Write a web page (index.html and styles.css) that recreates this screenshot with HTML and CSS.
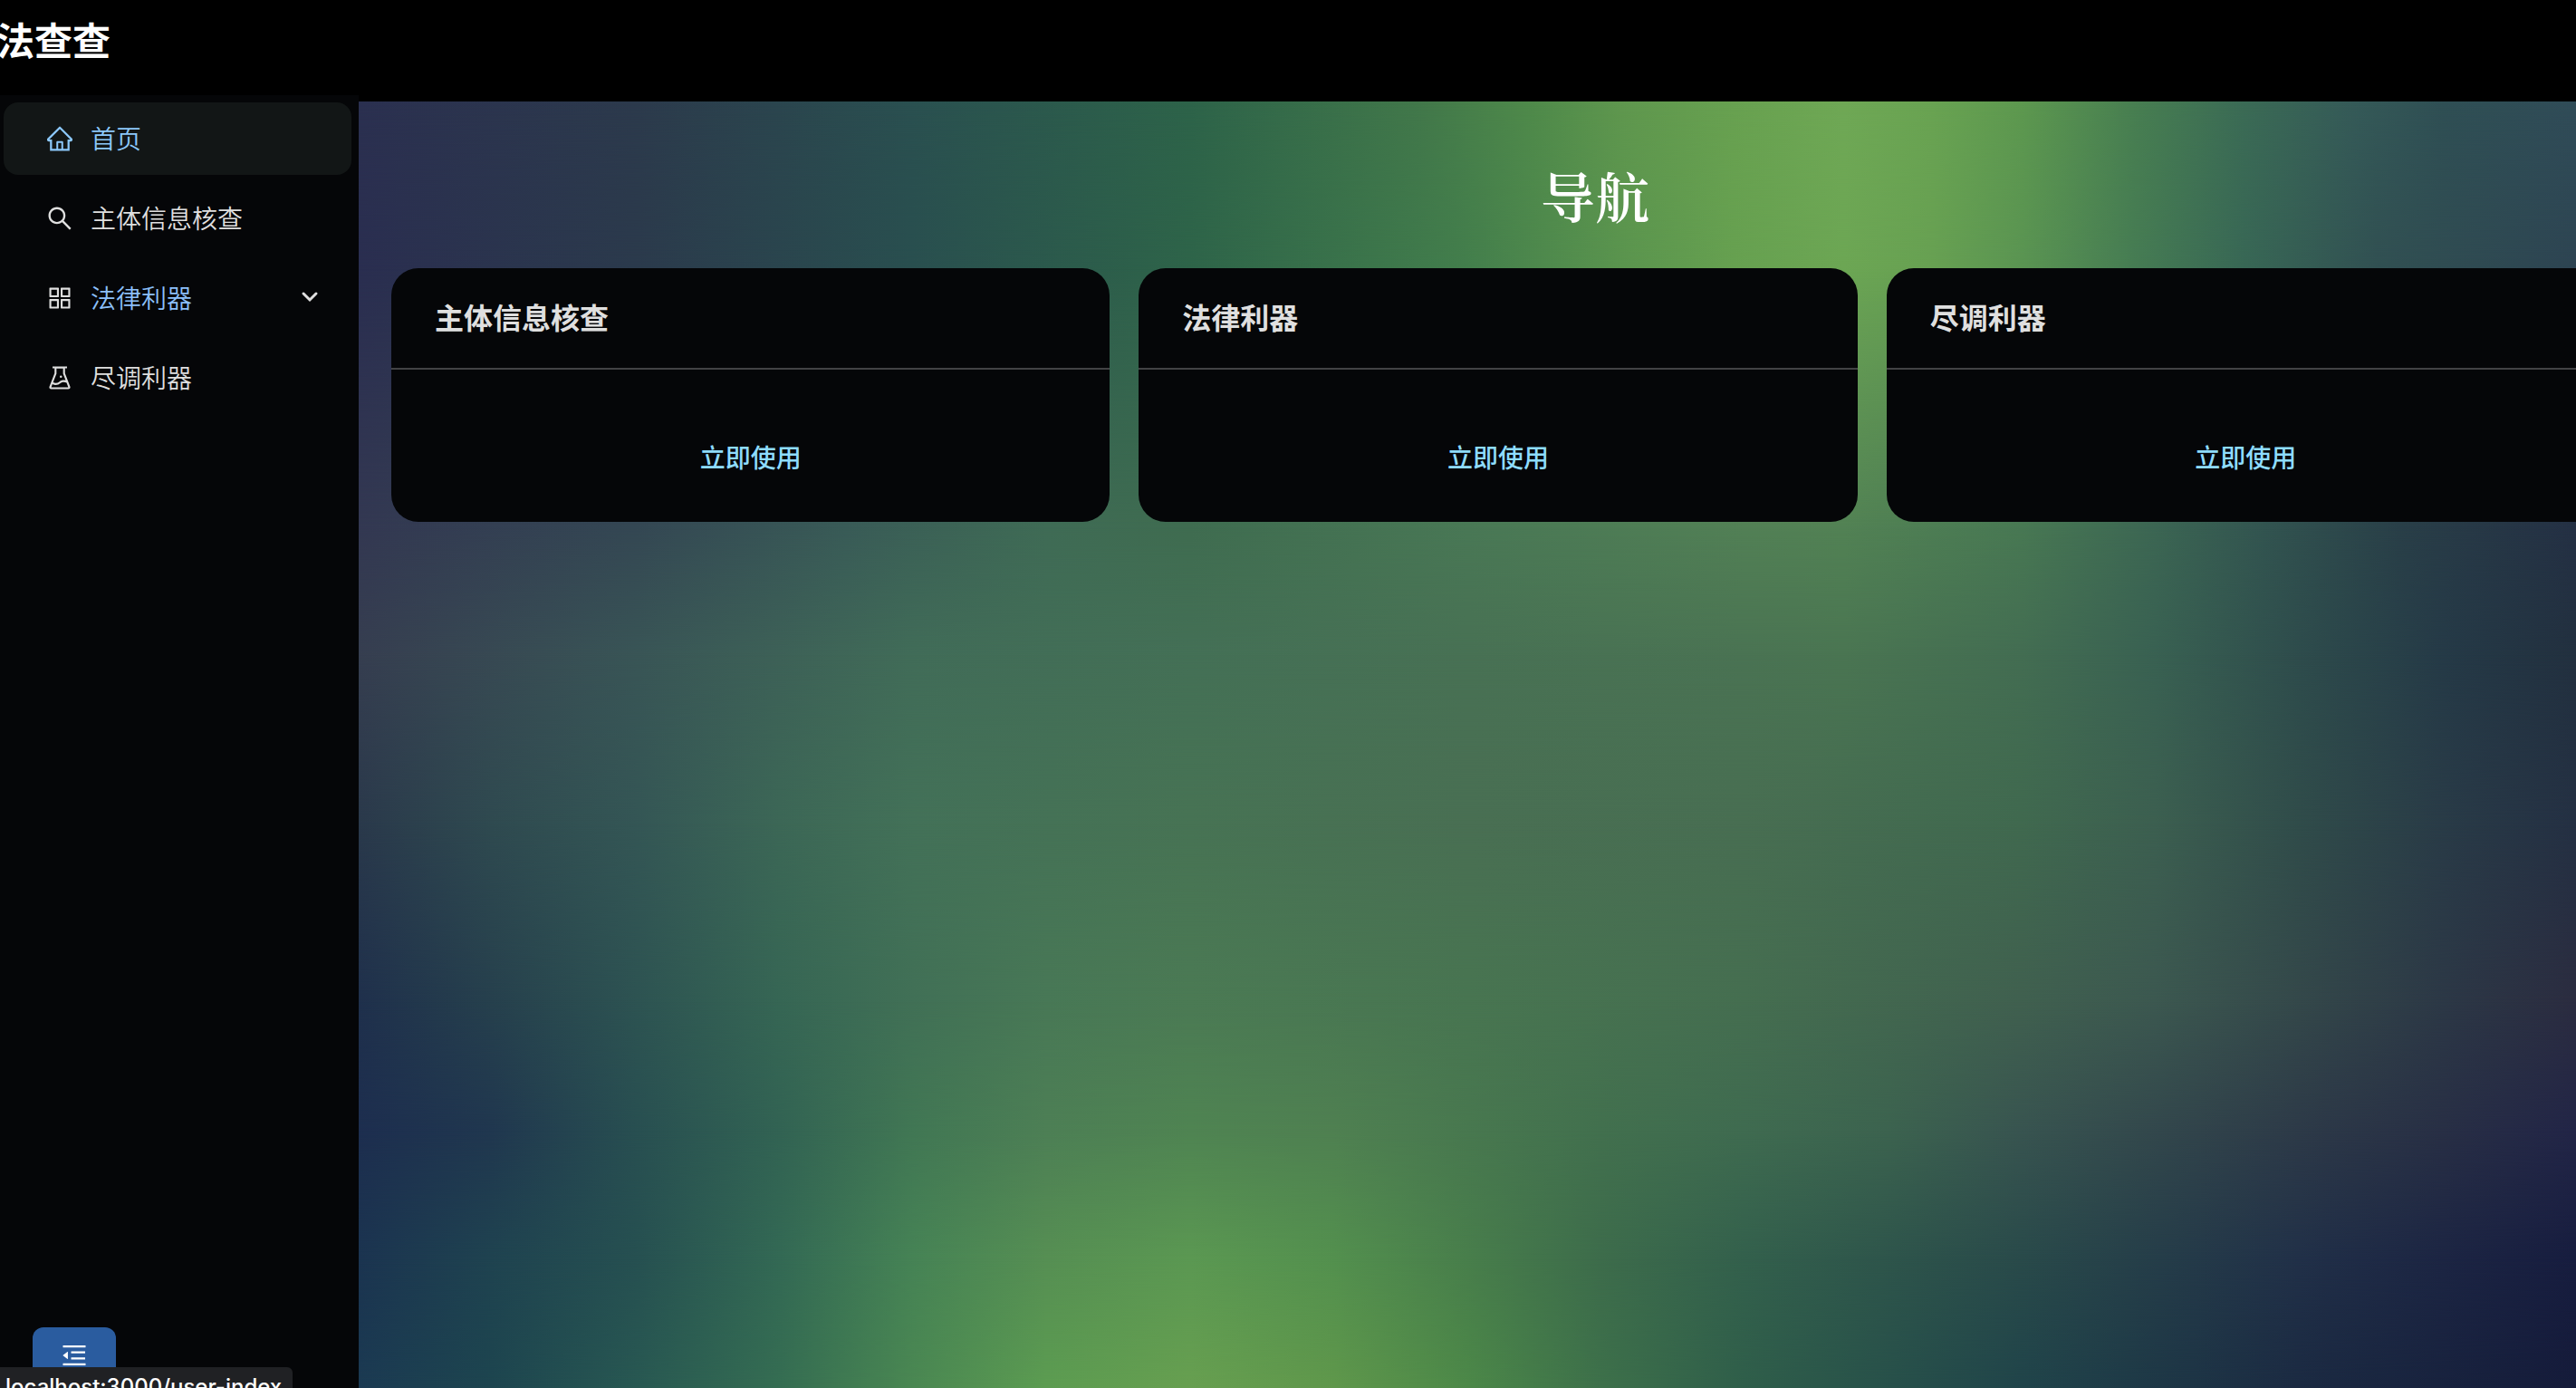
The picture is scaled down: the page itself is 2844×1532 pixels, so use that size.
FILE: index.html
```html
<!DOCTYPE html>
<html lang="zh-CN">
<head>
<meta charset="utf-8">
<meta name="viewport" content="width=device-width, initial-scale=1">
<title>法查查</title>
<link rel="stylesheet" href="styles.css">
</head>
<body>
<header class="topbar"><h1 class="brand">法查查</h1></header>
<div class="shell">
  <aside class="sidebar">
    <nav class="menu">
      <a class="menu-item is-selected" href="#home">
        <svg class="icon" viewBox="64 64 896 896" aria-hidden="true"><path d="M946.5 505L560.1 118.8l-25.9-25.9a31.5 31.5 0 00-44.4 0L77.5 505a63.9 63.9 0 00-18.8 46c.4 35.2 29.7 63.3 64.9 63.3h42.5V940h691.8V614.3h43.4c17.1 0 33.2-6.7 45.3-18.8a63.6 63.6 0 0018.7-45.3c0-17-6.7-33.1-18.8-45.2zM568 868H456V664h112v204zm217.9-325.7V868H632V640c0-22.1-17.9-40-40-40H432c-22.1 0-40 17.9-40 40v228H238.1V542.3h-96l370-369.7 23.1 23.1L882 542.3h-96.1z"/></svg>
        <span>首页</span>
      </a>
      <a class="menu-item" href="#subject">
        <svg class="icon" viewBox="64 64 896 896" aria-hidden="true"><path d="M909.6 854.5L649.9 594.8C690.2 542.7 712 479 712 412c0-80.2-31.3-155.4-87.9-212.1-56.6-56.7-132-87.9-212.1-87.9s-155.5 31.3-212.1 87.9C143.2 256.5 112 331.8 112 412c0 80.1 31.3 155.5 87.9 212.1C256.5 680.8 331.8 712 412 712c67 0 130.6-21.8 182.7-62l259.7 259.6a8.2 8.2 0 0011.6 0l43.6-43.5a8.2 8.2 0 000-11.6zM570.4 570.4C528 612.7 471.8 636 412 636s-116-23.3-158.4-65.6C211.3 528 188 471.8 188 412s23.3-116.1 65.6-158.4C296 211.3 352.2 188 412 188s116.1 23.2 158.4 65.6S636 352.2 636 412s-23.3 116.1-65.6 158.4z"/></svg>
        <span>主体信息核查</span>
      </a>
      <a class="menu-item is-parent" href="#legal">
        <svg class="icon" viewBox="64 64 896 896" aria-hidden="true"><path d="M464 144H160c-8.800 0-16 7.200-16 16v304c0 8.800 7.200 16 16 16h304c8.800 0 16-7.200 16-16V160c0-8.800-7.200-16-16-16zm-52 268H212V212h200v200zm452-268H560c-8.800 0-16 7.200-16 16v304c0 8.800 7.200 16 16 16h304c8.800 0 16-7.200 16-16V160c0-8.800-7.200-16-16-16zm-52 268H612V212h200v200zM464 544H160c-8.800 0-16 7.200-16 16v304c0 8.800 7.200 16 16 16h304c8.800 0 16-7.200 16-16V560c0-8.800-7.200-16-16-16zm-52 268H212V612h200v200zm452-268H560c-8.800 0-16 7.200-16 16v304c0 8.800 7.200 16 16 16h304c8.800 0 16-7.200 16-16V560c0-8.800-7.200-16-16-16zm-52 268H612V612h200v200z"/></svg>
        <span>法律利器</span>
        <svg class="chevron" viewBox="0 0 20 14" aria-hidden="true"><path d="M3 3l7 7 7-7"/></svg>
      </a>
      <a class="menu-item" href="#diligence">
        <svg class="icon" viewBox="64 64 896 896" aria-hidden="true"><path d="M512 472a40 40 0 1080 0 40 40 0 10-80 0zm367 352.900L696.300 352V178H768v-68H256v68h71.700v174L145 824.900c-2.800 7.400-4.300 15.200-4.300 23.100 0 35.300 28.700 64 64 64h614.600c7.900 0 15.700-1.500 23.100-4.300 33-12.700 49.400-49.800 36.600-82.800zM395.700 364.700V180h232.600v184.700L719.200 600c-20.700-5.300-42.100-8-63.900-8-61.200 0-119.200 21.500-165.300 60a188.780 188.780 0 01-121.300 43.900c-32.700 0-64.100-8.300-91.800-23.700l118.800-307.500zM210.500 844l41.700-107.800c35.700 18.100 75.400 27.800 116.600 27.800 61.200 0 119.200-21.500 165.300-60 33.900-28.200 76.300-43.900 121.300-43.900 35 0 68.400 9.500 97.600 27.100L813.500 844h-603z"/></svg>
        <span>尽调利器</span>
      </a>
    </nav>
    <button class="collapse" type="button" aria-label="收起菜单">
      <svg viewBox="0 0 1024 1024" aria-hidden="true"><path d="M408 442h480c4.400 0 8-3.600 8-8v-56c0-4.400-3.600-8-8-8H408c-4.400 0-8 3.600-8 8v56c0 4.400 3.600 8 8 8zm-8 204c0 4.400 3.600 8 8 8h480c4.400 0 8-3.600 8-8v-56c0-4.400-3.600-8-8-8H408c-4.400 0-8 3.600-8 8v56zm504-486H120c-4.400 0-8 3.600-8 8v56c0 4.400 3.600 8 8 8h784c4.400 0 8-3.600 8-8v-56c0-4.400-3.600-8-8-8zm0 632H120c-4.400 0-8 3.600-8 8v56c0 4.400 3.600 8 8 8h784c4.400 0 8-3.600 8-8v-56c0-4.400-3.600-8-8-8zM115.400 518.900L271.700 642c5.800 4.600 14.400.5 14.400-6.900V388.900c0-7.400-8.500-11.500-14.400-6.900L115.400 505.100a8.740 8.740 0 000 13.800z"/></svg>
    </button>
  </aside>
  <main class="content">
    <div class="aurora" aria-hidden="true">
      <i class="band band-1"></i><i class="band band-2"></i><i class="band band-3"></i>
      <i class="band band-4"></i><i class="band band-5"></i><i class="band band-6"></i>
      <i class="band band-7"></i><i class="band band-8"></i><i class="band band-9"></i>
    </div>
    <h2 class="page-title">导航</h2>
    <section class="cards">
      <article class="card">
        <h3 class="card-title">主体信息核查</h3>
        <div class="card-body"><button class="use" type="button">立即使用</button></div>
      </article>
      <article class="card">
        <h3 class="card-title">法律利器</h3>
        <div class="card-body"><button class="use" type="button">立即使用</button></div>
      </article>
      <article class="card">
        <h3 class="card-title">尽调利器</h3>
        <div class="card-body"><button class="use" type="button">立即使用</button></div>
      </article>
    </section>
  </main>
</div>
<div class="link-status">localhost:3000/user-index</div>
</body>
</html>
```
FILE: styles.css
```css
* { box-sizing: border-box; }

body {
  margin: 0;
  height: 100vh;
  display: flex;
  flex-direction: column;
  overflow: hidden;
  background: #000;
  color: #dfdfdf;
  font-family: "Noto Sans CJK SC", sans-serif;
  font-size: 28px;
}

h1, h2, h3 { margin: 0; }

.topbar { padding: 13px 0 32px; background: #000; }
.brand {
  margin-left: -4px;
  color: #fff;
  font-size: 42px;
  font-weight: 600;
  line-height: 60px;
}

.shell { flex: 1; display: flex; min-height: 0; }

/* Sidebar */
.sidebar {
  flex: 0 0 396px;
  display: flex;
  flex-direction: column;
  padding: 8px 8px 3px 4px;
  background: #050608;
}
.menu { display: flex; flex-direction: column; gap: 8px; }
.menu-item {
  display: flex;
  align-items: center;
  gap: 20px;
  height: 80px;
  padding: 0 36px 0 48px;
  border-radius: 16px;
  color: #dfdfdf;
  font-weight: 350;
  text-decoration: none;
}
.menu-item span { padding-bottom: 2px; }
.menu-item.is-selected { background: #121616; color: #8cc8fa; }
.menu-item.is-parent span { color: #8cc0fa; }
.icon { width: 28px; height: 28px; fill: currentColor; }
.chevron {
  width: 20px;
  height: 14px;
  margin: 0 0 2px auto;
  fill: none;
  stroke: currentColor;
  stroke-width: 3;
  stroke-linecap: round;
}
.collapse {
  display: flex;
  align-items: center;
  justify-content: center;
  width: 92px;
  height: 64px;
  margin: auto 0 0 32px;
  padding: 0 0 2px;
  border: 0;
  border-radius: 12px;
  background: #2a5c9f;
}
.collapse svg { width: 32px; height: 32px; fill: #fff; }

/* Content */
.content {
  position: relative;
  flex: 1;
  min-width: 0;
  border-top: 7px solid #000;
}
.page-title {
  position: relative;
  padding: 59px 0 37px 282px;
  color: #fff;
  font-family: "Noto Serif CJK SC", "Songti SC", serif;
  font-size: 60px;
  font-weight: 600;
  line-height: 88px;
  text-align: center;
}
.cards {
  position: relative;
  display: grid;
  grid-template-columns: repeat(3, 1fr);
  gap: 32px;
  margin: 0 -32px 0 36px;
}
.card { border-radius: 30px; background: #050608; }
.card-title {
  padding: 29px 48px 33px;
  border-bottom: 2px solid #424244;
  color: #dfdfdf;
  font-size: 32px;
  font-weight: 600;
  line-height: 48px;
}
.card-body { display: flex; justify-content: center; padding: 64px 48px 40px; }
.use {
  height: 64px;
  padding: 0 32px;
  border: 0;
  background: transparent;
  color: #8edcff;
  font: 500 28px/40px "Noto Sans CJK SC", sans-serif;
}

/* Backdrop: horizontal colour bands, each fading in over the one above it */
.aurora { position: absolute; inset: 0; }
.band {
  position: absolute;
  inset: 0;
  -webkit-mask-image: linear-gradient(to bottom, transparent var(--from), #000 var(--to));
  mask-image: linear-gradient(to bottom, transparent var(--from), #000 var(--to));
}
.band-1 {
  -webkit-mask-image: none;
  mask-image: none;
  background: linear-gradient(to right, #2b3050, #2c3a4c 12.5%, #2a5050 25%, #2d6349 37.5%, #42784a 48%, #4f8a4a 53%, #5f974e 57%, #68a150 62%, #6fa855 67%, #69a352 71%, #5d984f 75%, #487f51 80%, #3b6b55 85%, #355a58 90%, #2f4f54 94%, #304c58);
}
.band-2 {
  --from: 0%; --to: 13%;
  background: linear-gradient(to right, #2a2e50, #2b3a4c 12.5%, #294f4f 25%, #2e6449 37.5%, #437e4c 50%, #5a944e 57%, #66a050 62%, #6ca654 67%, #67a052 71%, #5a9452 75%, #467c53 80%, #386755 85%, #315052 91%, #2d4452);
}
.band-3 {
  --from: 13%; --to: 33%;
  background: linear-gradient(to right, #333852, #344753 12.5%, #395b57 22%, #3f6b55 31%, #3f6c50 37.5%, #497855 50%, #528055 62.5%, #528254 67%, #487853 75%, #3c6653 81%, #325450 86%, #293f48 92%, #243044);
}
.band-4 {
  --from: 33%; --to: 43%;
  background: linear-gradient(to right, #363e50, #395556 12.5%, #416c58 25%, #447056 37.5%, #487154 50%, #4a7353 62.5%, #4a7552 67%, #436d52 75%, #396152 81%, #2e4c4c 87.5%, #253a47 94%, #22303f);
}
.band-5 {
  --from: 43%; --to: 56%;
  background: linear-gradient(to right, #2a394b, #2f4a50 6%, #345655 12.5%, #3c6756 19%, #437158 25%, #477354 37.5%, #496f53 50%, #486e52 62.5%, #40694f 75%, #3c5f50 81%, #304c4a 87.5%, #293b47 94%, #243043);
}
.band-6 {
  --from: 56%; --to: 70%;
  background: linear-gradient(to right, #1f304c, #26404d 6%, #2d5352 12.5%, #366654 19%, #417056 25%, #487856 31%, #4b7a54 37.5%, #487551 50%, #456e50 62.5%, #40604f 75%, #3c5850 81%, #34484a 87.5%, #2c3846 94%, #2b2c40);
}
.band-7 {
  --from: 70%; --to: 80%;
  background: linear-gradient(to right, #1d2e4f, #20374f 6%, #284f51 12.5%, #326353 19%, #417754 25%, #4d7f55 31%, #4f8452 37.5%, #4f8051 44%, #48784f 50%, #42704e 56%, #3f6b50 62.5%, #3c634f 69%, #385450 75%, #2d3a48 87.5%, #282f45 94%, #222547);
}
.band-8 {
  --from: 80%; --to: 90%;
  background: linear-gradient(to right, #1b3450, #1f4350 6%, #265051 12.5%, #336954 19%, #468355 25%, #568f53 31%, #5b9852 37.5%, #53904e 44%, #487e4b 50%, #3d6c4b 56%, #33604c 62.5%, #294a4a 75%, #213048 87.5%, #1c2543 94%, #171d3f);
}
.band-9 {
  --from: 90%; --to: 100%;
  background: linear-gradient(to right, #1b3a52, #1d454f 6%, #285852 12.5%, #356d52 19%, #4a8752 25%, #5c9c51 31%, #679f50 37.5%, #5f974b 44%, #4c8848 50%, #3d704a 56%, #2f5e4a 62.5%, #20444a 75%, #1b2a42 87.5%, #151b3a);
}

/* Browser link preview over the lower left corner */
.link-status {
  position: fixed;
  left: 0;
  bottom: -21px;
  height: 44px;
  padding: 0 12px 0 6px;
  border-top-right-radius: 6px;
  background: #202124;
  color: #fff;
  font: 500 24px/44px Inter, sans-serif;
  white-space: nowrap;
}
```
